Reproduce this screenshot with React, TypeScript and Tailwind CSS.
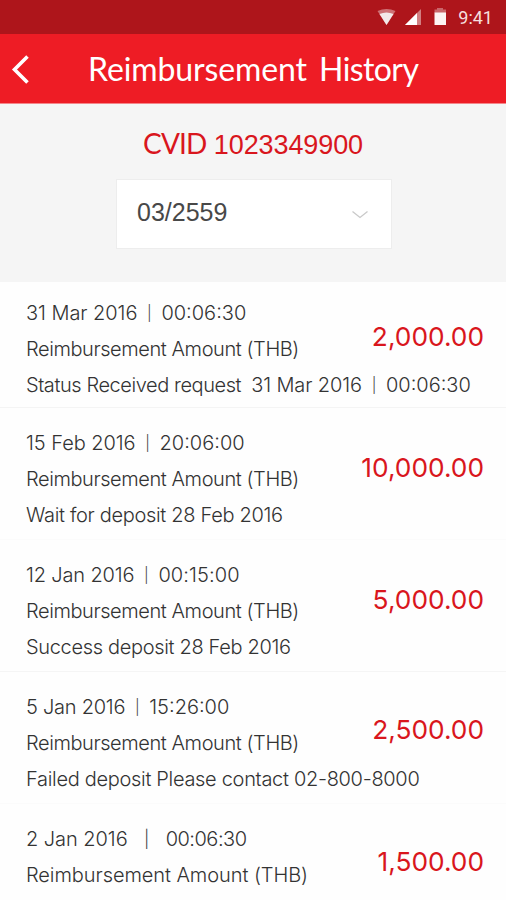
import clsx from 'clsx';

type Entry = {
  date: string;
  time: string;
  amount: string;
  amountClass: string;
  status?: string;
  statusDate?: string;
  statusTime?: string;
  statusClass?: string;
  rowClass: string;
  dateClass?: string;
  timeClass?: string;
  labelClass?: string;
  wide?: boolean;
};

const entries: Entry[] = [
  {
    date: '31 Mar 2016',
    time: '00:06:30',
    amount: '2,000.00',
    amountClass: 'mt-[26px]',
    status: 'Status Received request',
    statusDate: '31 Mar 2016',
    statusTime: '00:06:30',
    statusClass: 'tracking-[-0.43px]',
    rowClass: 'h-[126px] pt-[13px] border-[#f4f4f4]',
  },
  {
    date: '15 Feb 2016',
    time: '20:06:00',
    amount: '10,000.00',
    amountClass: 'mt-[27px]',
    status: 'Wait for deposit 28 Feb 2016',
    statusClass: 'tracking-[-0.32px]',
    rowClass: 'h-[132px] pt-[17px] border-[#fbfbfb]',
  },
  {
    date: '12 Jan 2016',
    time: '00:15:00',
    dateClass: 'tracking-[-0.15px]',
    timeClass: 'tracking-[0.1px]',
    amount: '5,000.00',
    amountClass: 'mt-[27px]',
    status: 'Success deposit 28 Feb 2016',
    statusClass: 'tracking-[-0.33px]',
    rowClass: 'h-[132px] pt-[17px] border-[#f5f5f5]',
  },
  {
    date: '5 Jan 2016',
    time: '15:26:00',
    dateClass: 'tracking-[-0.25px]',
    amount: '2,500.00',
    amountClass: 'mt-[25px]',
    status: 'Failed deposit Please contact 02-800-8000',
    statusClass: 'tracking-[-0.31px]',
    rowClass: 'h-[132px] pt-[17px] border-[#fbfbfb]',
  },
  {
    date: '2 Jan 2016',
    time: '00:06:30',
    timeClass: 'tracking-[-0.5px]',
    labelClass: 'tracking-[-0.07px]',
    amount: '1,500.00',
    amountClass: 'mt-[25px]',
    rowClass: 'h-[96px] pt-[17px] border-transparent',
    wide: true,
  },
];

export default function App() {
  return (
    <div className="flex h-[900px] w-[506px] flex-col overflow-hidden bg-[#fefefe] font-['Inter',sans-serif]">
      <StatusBar />
      <Header />
      <Filter />
      <main>
        {entries.map((entry) => (
          <HistoryRow key={entry.date} entry={entry} />
        ))}
      </main>
    </div>
  );
}

function StatusBar() {
  return (
    <div className="flex h-[34px] shrink-0 items-center justify-end bg-[#ae151b] pr-[13px]">
      <svg width="76" height="20" viewBox="0 0 76 20" className="mt-[2px] mr-[5px]">
        <path d="M0.500 3Q9.500 -1 18.500 3L9.500 17Z" fill="#fff" fillOpacity="0.4" />
        <path d="M2.500 6Q9.500 3 16.500 6L9.500 17Z" fill="#f3eaea" />
        <path d="M28 17L44 1V17Z" fill="#fff" fillOpacity="0.45" />
        <path d="M28 17L40 5V17Z" fill="#fff" />
        <path d="M60 0H66V1.500H69V5H57.500V1.500H60Z" fill="#fff" fillOpacity="0.35" />
        <path d="M57.500 4.500H69V17H57.500Z" fill="#fdf3f2" />
      </svg>
      <span className="mt-[2px] font-['Roboto',sans-serif] text-[18px] leading-5 text-[#f6dede]">9:41</span>
    </div>
  );
}

function Header() {
  return (
    <header className="flex h-[70px] shrink-0 items-center border-b border-[#f4868a] bg-[#ee1c25]">
      <svg width="20" height="30" viewBox="0 0 20 30" fill="none" className="ml-[11px]">
        <path d="M16.500 2.500L3.500 15.500L16.500 28.500" stroke="#fff" strokeWidth="3.600" />
      </svg>
      <h1 className="ml-[57px] whitespace-nowrap font-['Lato',sans-serif] text-[32px] leading-10 tracking-[-0.1px] text-white [word-spacing:4px]">
        Reimbursement <span className="tracking-[-0.6px]">History</span>
      </h1>
    </header>
  );
}

function Filter() {
  return (
    <section className="flex h-[178px] shrink-0 flex-col items-center bg-[#f5f5f5] pt-[23px]">
      <p className="flex h-8 w-[220px] items-baseline whitespace-pre text-[27px] leading-8 text-[#d9161d]">
        <span className="w-[72px] font-['Lato',sans-serif] text-[28px] tracking-[-0.8px]">CVID</span>
        <span className="font-['Liberation_Sans',sans-serif] tracking-[-0.1px]">1023349900</span>
      </p>
      <button className="mt-[20px] ml-[2px] flex h-[70px] w-[276px] items-center justify-between border border-[#ededed] bg-white pl-5 pr-[22px] text-[#484848]">
        <span className="pb-[2px] font-['Liberation_Sans',sans-serif] text-[25px]">03/2559</span>
        <svg width="18" height="10" viewBox="0 0 18 10" fill="none" className="mt-[2px]">
          <path d="M1.500 1.500L9 7.500L16.500 1.500" stroke="#c9c9c9" strokeWidth="1.300" />
        </svg>
      </button>
    </section>
  );
}

function Divider({ wide }: { wide?: boolean }) {
  return (
    <span
      className={clsx(
        'shrink-0 text-center text-[#444]',
        wide ? 'w-[38px] text-[17px]' : 'w-[24px] text-[15px]',
      )}
    >
      |
    </span>
  );
}

function HistoryRow({ entry }: { entry: Entry }) {
  return (
    <article
      className={clsx(
        'flex justify-between border-b pl-[26px] pr-[22px] text-[20px] font-light leading-9 text-[#333]',
        entry.rowClass,
      )}
    >
      <div className="w-0 whitespace-pre">
        <p className="flex h-9">
          <span className={entry.dateClass ?? 'tracking-[-0.05px]'}>{entry.date}</span>
          <Divider wide={entry.wide} />
          <span className={entry.timeClass}>{entry.time}</span>
        </p>
        <p className={entry.labelClass ?? 'tracking-[-0.42px]'}>Reimbursement Amount (THB)</p>
        {entry.status && (
          <p className="flex h-9">
            <span className={entry.statusClass}>{entry.status}</span>
            {entry.statusDate && (
              <>
                <span className="ml-[10px] tracking-[-0.1px]">{entry.statusDate}</span>
                <Divider />
                <span>{entry.statusTime}</span>
              </>
            )}
          </p>
        )}
      </div>
      <p className={clsx('h-8 text-[26.3px] font-normal leading-8 text-[#d9161d]', entry.amountClass)}>
        {entry.amount}
      </p>
    </article>
  );
}
